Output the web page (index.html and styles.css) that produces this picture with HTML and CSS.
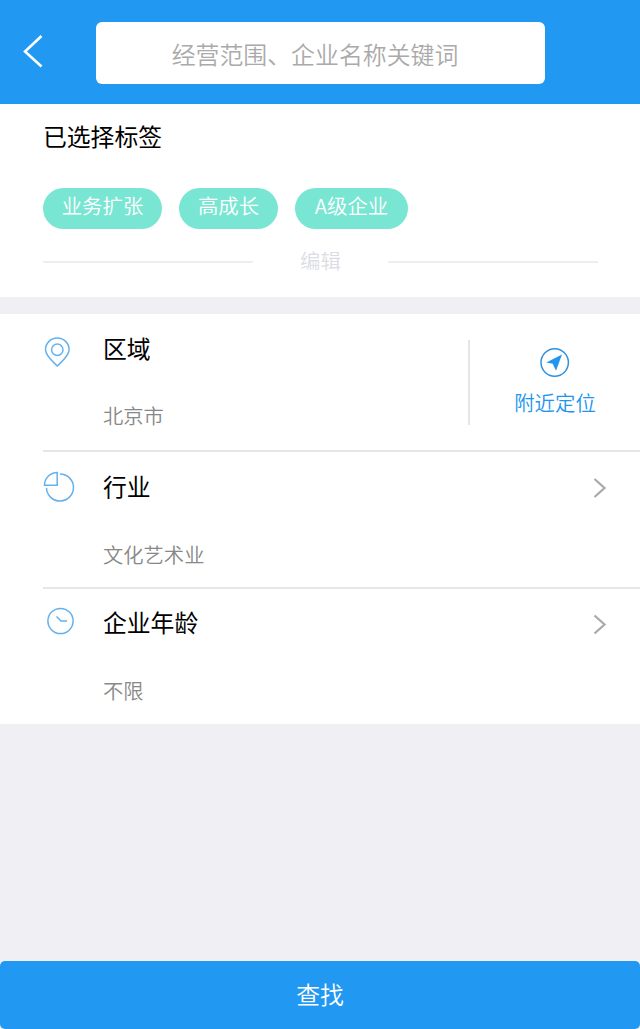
FILE: index.html
```html
<!DOCTYPE html>
<html lang="zh-CN">
<head>
<meta charset="utf-8">
<title>企业查找</title>
<link rel="stylesheet" href="styles.css">
</head>
<body>
<div class="page">
  <header class="topbar">
    <svg class="back" width="24" height="36" viewBox="0 0 24 36"><path d="M21.500 3 5 18.500 21.500 33.500"/></svg>
    <div class="search">经营范围、企业名称关键词</div>
  </header>
  <section class="selected">
    <h2 class="heading">已选择标签</h2>
    <div class="tags">
      <span class="tag tag-wide">业务扩张</span>
      <span class="tag tag-narrow">高成长</span>
      <span class="tag tag-grade">A级企业</span>
    </div>
    <div class="edit"><i class="rule"></i><span>编辑</span><i class="rule"></i></div>
  </section>
  <main class="filters">
    <div class="row row-area">
      <svg class="icon" width="34" height="34" viewBox="0 0 34 34"><path d="M15.300 31C12 27.500 3.500 21 3.500 14.700a11.800 11.800 0 0 1 23.600 0C27.100 21 18.600 27.500 15.300 31Z"/><circle cx="15.300" cy="14.700" r="5.700"/></svg>
      <div class="info"><div class="name">区域</div><div class="value">北京市</div></div>
      <div class="locate">
        <svg class="compass" width="30" height="30" viewBox="0 0 30 30"><circle cx="14.700" cy="15.500" r="13.700"/><path d="M22 7.500 6.300 15.500 12.700 16.700 16 23.700Z"/></svg>
        <span>附近定位</span>
      </div>
    </div>
    <div class="row row-industry">
      <svg class="icon" width="34" height="34" viewBox="0 0 34 34"><path d="M15.200 3.500V16.300H2.500A12.800 12.800 0 0 1 15.200 3.500Z"/><path d="M18 5A13.500 13.500 0 1 1 4.500 19"/></svg>
      <div class="info"><div class="name">行业</div><div class="value">文化艺术业</div></div>
      <svg class="chevron" width="16" height="24" viewBox="0 0 16 24"><path d="M2.500 3 12.500 12 2.500 21"/></svg>
    </div>
    <div class="row">
      <svg class="icon" width="34" height="34" viewBox="0 0 34 34"><circle cx="18.500" cy="16" r="12.600"/><path d="M14.500 11.500 19 16H25"/></svg>
      <div class="info"><div class="name">企业年龄</div><div class="value">不限</div></div>
      <svg class="chevron" width="16" height="24" viewBox="0 0 16 24"><path d="M2.500 3.500 12.500 12.500 2.500 21.500"/></svg>
    </div>
  </main>
  <button class="submit">查找</button>
</div>
</body>
</html>
```
FILE: styles.css
```css
* { box-sizing: border-box; }
body { margin: 0; font-family: "Noto Sans CJK SC", sans-serif; background: #efeff4; }
.page { width: 640px; height: 1029px; display: flex; flex-direction: column; }
svg { display: block; flex: none; fill: none; }
.topbar { height: 104px; background: #2198f1; display: flex; padding: 22px 0 0 20px; }
.back { margin-top: 11px; stroke: #fff; stroke-width: 2.600; }
.search { width: 449px; height: 62px; margin-left: 52px; padding-right: 11px; border-radius: 6px; background: #fff; color: #aaa; font-size: 23.900px; font-weight: 350; line-height: 63px; text-align: center; }
.selected { height: 193px; background: #fff; padding: 16px 42px 0 43px; }
.heading { margin: 0; font-size: 23.800px; font-weight: 400; line-height: 32px; color: #000; }
.tags { display: flex; gap: 17px; margin-top: 36px; }
.tag { height: 41px; border-radius: 21px; background: #79e6d3; color: #fff; font-size: 20.400px; font-weight: 350; line-height: 35px; text-align: center; }
.tag-wide { width: 119px; }
.tag-narrow { width: 99px; }
.tag-grade { width: 113px; }
.edit { display: flex; align-items: center; justify-content: space-between; height: 30px; margin-top: 18px; color: #dcdce4; font-size: 20.400px; font-weight: 350; line-height: 26px; }
.edit span { margin-top: -4px; }
.rule { width: 210px; height: 2px; background: #eeeef1; }
.filters { margin-top: 17px; background: #fff; padding-left: 43px; }
.row { height: 136px; display: flex; padding-top: 17px; }
.row + .row { border-top: 2px solid #e6e6e8; padding-top: 16px; }
.row + .row-industry { height: 137px; padding-top: 17px; }
.row:last-child { height: 137px; }
.icon { margin-left: -1px; stroke: #62b1f0; stroke-width: 1.500; margin-top: 4px; }
.row + .row .icon { margin-top: 0; }
.info { flex: 1; margin-left: 27px; }
.name { font-size: 23.800px; line-height: 34px; color: #000; }
.value { margin-top: 33px; font-size: 20.300px; font-weight: 350; line-height: 34px; color: #888; }
.row + .row .value { margin-top: 34px; }
.locate { width: 172px; height: 85px; margin-top: 9px; border-left: 2px solid #e6e6e8; display: flex; flex-direction: column; align-items: center; padding-top: 7px; color: #2196f0; font-size: 20.400px; font-weight: 350; line-height: 30px; }
.locate span { margin-top: 10px; }
.compass circle { stroke: #2e91df; stroke-width: 1.500; }
.compass path { fill: #2196f0; }
.chevron { margin: 7px 32px 0 0; stroke: #aaa; stroke-width: 2.300; }
.submit { height: 68px; margin-top: auto; border: 0; border-radius: 5px; background: #2198f1; color: #fff; font: 350 23.800px/66px "Noto Sans CJK SC", sans-serif; padding: 0 0 2px; }
```
